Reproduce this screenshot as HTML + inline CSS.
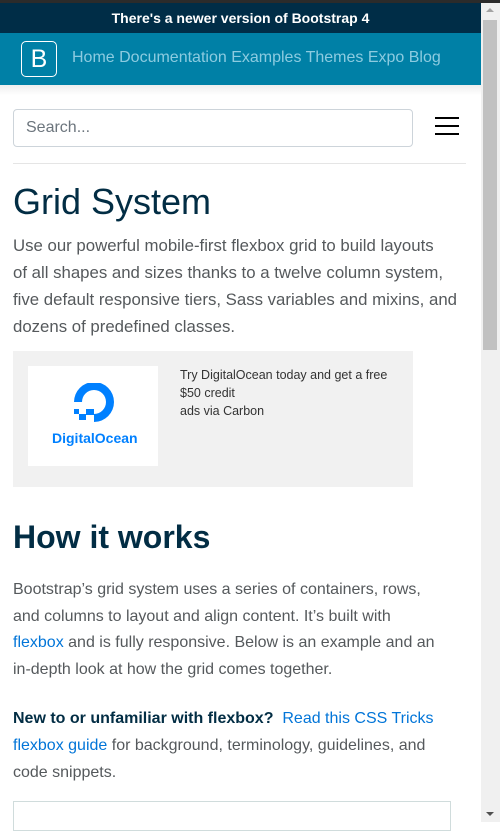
<!DOCTYPE html>
<html><head><style>
*{margin:0;padding:0;box-sizing:border-box}
body{width:500px;height:822px;overflow:hidden;position:relative;background:#fff;font-family:"Liberation Sans",sans-serif;}
.a{position:absolute;white-space:nowrap}
</style></head><body>
<div class="a" style="left:0;top:0;width:500px;height:3px;background:#2b2b2b"></div>
<div class="a" style="left:0;top:3px;width:481px;height:30px;background:#002d47;color:#fff;font-weight:bold;font-size:14px;line-height:30px;text-align:center">There's a newer version of Bootstrap 4</div>
<div class="a" style="left:0;top:33px;width:481px;height:52px;background:#0080a6"></div>
<div class="a" style="left:21px;top:41px;width:36px;height:36px;border:1px solid #fff;border-radius:5px;color:#fff;font-size:25px;line-height:34px;text-align:center">B</div>
<div class="a" style="left:72px;top:48px;color:#8ccbe0;font-size:16px;line-height:20px">Home Documentation Examples Themes Expo Blog</div>
<div class="a" style="left:0;top:85px;width:481px;height:10px;background:linear-gradient(#eee,#fff)"></div>
<div class="a" style="left:13px;top:109px;width:400px;height:38px;border:1px solid #cdd4da;border-radius:4px;color:#6c757d;font-size:16px;line-height:36px;padding-left:12px">Search...</div>
<div class="a" style="left:435px;top:117px;width:24px;height:2px;background:#000"></div>
<div class="a" style="left:435px;top:125px;width:24px;height:2px;background:#000"></div>
<div class="a" style="left:435px;top:133px;width:24px;height:2px;background:#000"></div>
<div class="a" style="left:13px;top:163px;width:453px;height:1px;background:#e5e5e5"></div>
<div class="a" style="left:13px;top:180px;color:#022d44;font-size:36px;line-height:44px">Grid System</div>
<div class="a" style="left:13px;top:232px;color:#55595c;font-size:16.8px;line-height:27px;font-weight:300">Use our powerful mobile-first flexbox grid to build layouts<br>of all shapes and sizes thanks to a twelve column system,<br>five default responsive tiers, Sass variables and mixins, and<br>dozens of predefined classes.</div>
<div class="a" style="left:13px;top:351px;width:400px;height:136px;background:#f1f1f1"></div>
<div class="a" style="left:28px;top:366px;width:130px;height:100px;background:#fff"></div>
<svg class="a" style="left:68px;top:383px" width="50" height="45" viewBox="0 0 50 45"><path d="M26 39 V31 A12 12 0 1 0 14 19 H6 A20 20 0 1 1 26 39Z" fill="#0080ff"/><rect x="18" y="26" width="8" height="6" fill="#0080ff"/><rect x="6" y="26" width="5" height="5" fill="#0080ff"/><rect x="11" y="31" width="7" height="6" fill="#0080ff"/></svg>
<div class="a" style="left:52px;top:430px;color:#0080ff;font-size:14px;font-weight:bold">DigitalOcean</div>
<div class="a" style="left:180px;top:366px;color:#333;font-size:12.5px;line-height:18px">Try DigitalOcean today and get a free<br>$50 credit<br>ads via Carbon</div>
<div class="a" style="left:13px;top:517px;color:#022d44;font-size:32px;font-weight:bold;line-height:40px">How it works</div>
<div class="a" style="left:13px;top:577px;color:#55595c;font-size:16px;line-height:26.7px;font-weight:300">Bootstrap’s grid system uses a series of containers, rows,<br>and columns to layout and align content. It’s built with<br><span style="color:#0275d8">flexbox</span> and is fully responsive. Below is an example and an<br>in-depth look at how the grid comes together.</div>
<div class="a" style="left:13px;top:705px;color:#55595c;font-size:16px;line-height:27px;font-weight:300"><span style="color:#022d44;font-weight:700">New to or unfamiliar with flexbox?</span> &nbsp;<span style="color:#0275d8">Read this CSS Tricks</span><br><span style="color:#0275d8">flexbox guide</span> for background, terminology, guidelines, and<br>code snippets.</div>
<div class="a" style="left:13px;top:801px;width:438px;height:30px;border:1px solid #d0dcdc"></div>
<div class="a" style="left:481px;top:3px;width:19px;height:819px;background:#f0f0f0"></div>
<div class="a" style="left:483px;top:20px;width:14px;height:330px;background:#c1c1c1"></div>
<div class="a" style="left:486px;top:8px;width:0;height:0;border:4px solid transparent;border-bottom-color:#a3a3a3;border-top:0"></div>
<div class="a" style="left:486px;top:812px;width:0;height:0;border:4px solid transparent;border-top-color:#505050;border-bottom:0"></div>
</body></html>
